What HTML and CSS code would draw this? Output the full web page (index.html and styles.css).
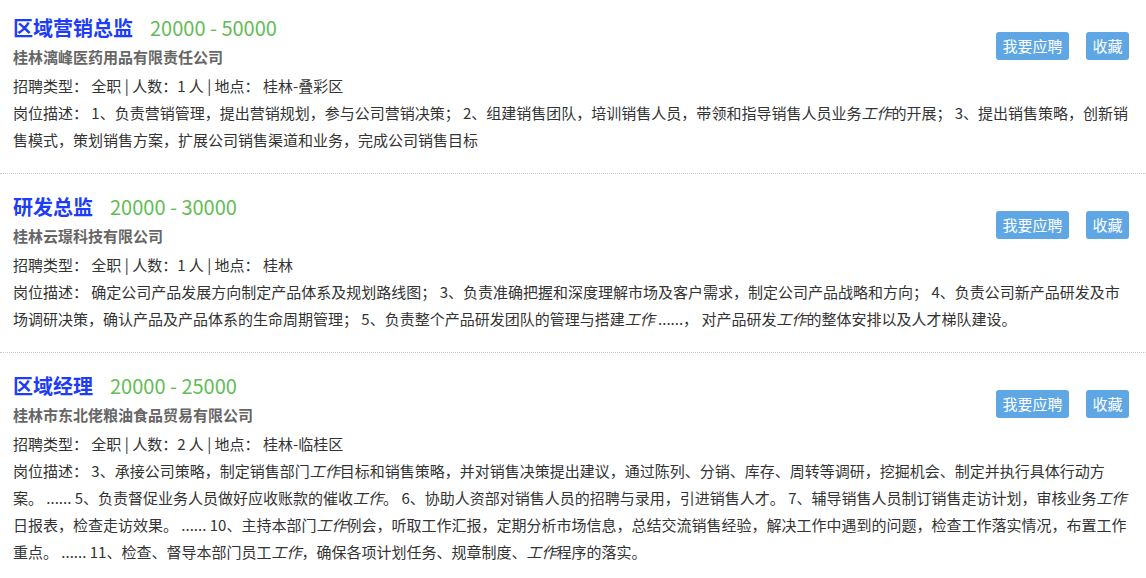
FILE: index.html
```html
<!DOCTYPE html>
<html lang="zh-CN">
<head>
<meta charset="utf-8">
<title>职位列表</title>
<link rel="stylesheet" href="styles.css">
</head>
<body>
<div class="list">
  <div class="job">
    <div class="head">
      <div class="main">
        <div class="title-row"><a class="title">区域营销总监</a><span class="salary">20000 - 50000</span></div>
        <div class="company">桂林漓峰医药用品有限责任公司</div>
      </div>
      <div class="actions"><a class="btn">我要应聘</a><a class="btn">收藏</a></div>
    </div>
    <div class="meta">招聘类型： 全职 | 人数：1 人 | 地点： 桂林-叠彩区</div>
    <div class="desc">岗位描述： 1、负责营销管理，提出营销规划，参与公司营销决策； 2、组建销售团队，培训销售人员，带领和指导销售人员业务<em>工作</em>的开展； 3、提出销售策略，创新销售模式，策划销售方案，扩展公司销售渠道和业务，完成公司销售目标</div>
  </div>
  <div class="job">
    <div class="head">
      <div class="main">
        <div class="title-row"><a class="title">研发总监</a><span class="salary">20000 - 30000</span></div>
        <div class="company">桂林云璟科技有限公司</div>
      </div>
      <div class="actions"><a class="btn">我要应聘</a><a class="btn">收藏</a></div>
    </div>
    <div class="meta">招聘类型： 全职 | 人数：1 人 | 地点： 桂林</div>
    <div class="desc">岗位描述： 确定公司产品发展方向制定产品体系及规划路线图； 3、负责准确把握和深度理解市场及客户需求，制定公司产品战略和方向； 4、负责公司新产品研发及市场调研决策，确认产品及产品体系的生命周期管理； 5、负责整个产品研发团队的管理与搭建<em>工作</em> ......， 对产品研发<em>工作</em>的整体安排以及人才梯队建设。</div>
  </div>
  <div class="job">
    <div class="head">
      <div class="main">
        <div class="title-row"><a class="title">区域经理</a><span class="salary">20000 - 25000</span></div>
        <div class="company">桂林市东北佬粮油食品贸易有限公司</div>
      </div>
      <div class="actions"><a class="btn">我要应聘</a><a class="btn">收藏</a></div>
    </div>
    <div class="meta">招聘类型： 全职 | 人数：2 人 | 地点： 桂林-临桂区</div>
    <div class="desc">岗位描述： 3、承接公司策略，制定销售部门<em>工作</em>目标和销售策略，并对销售决策提出建议，通过陈列、分销、库存、周转等调研，挖掘机会、制定并执行具体行动方案。 ...... 5、负责督促业务人员做好应收账款的催收<em>工作</em>。 6、协助人资部对销售人员的招聘与录用，引进销售人才。 7、辅导销售人员制订销售走访计划，审核业务<em>工作</em>日报表，检查走访效果。 ...... 10、主持本部门<em>工作</em>例会，听取工作汇报，定期分析市场信息，总结交流销售经验，解决工作中遇到的问题，检查工作落实情况，布置工作重点。 ...... 11、检查、督导本部门员工<em>工作</em>，确保各项计划任务、规章制度、<em>工作</em>程序的落实。</div>
  </div>
</div>
</body>
</html>
```
FILE: styles.css
```css
html, body {
  margin: 0;
  padding: 0;
  background: #fff;
}
body {
  font-family: "Noto Sans CJK SC", "Noto Sans", sans-serif;
  font-size: 15px;
  color: #333;
  overflow: hidden;
}
.job {
  padding: 18px 13px 20px 13px;
  border-bottom: 1px dotted #c8c8c8;
}
.job:first-child {
  padding-top: 13px;
}
.head {
  display: flex;
  justify-content: space-between;
  align-items: flex-start;
}
.title-row {
  line-height: 30px;
  height: 30px;
  white-space: nowrap;
}
.title {
  font-size: 20px;
  font-weight: bold;
  color: #1c3cfa;
  text-decoration: none;
}
.salary {
  font-size: 20px;
  color: #62bc55;
  margin-left: 17px;
}
.company {
  font-weight: bold;
  color: #666;
  line-height: 27px;
  margin-bottom: 2px;
}
.actions {
  display: flex;
  gap: 17px;
  margin-top: 19px;
  margin-right: 4px;
}
.btn {
  display: block;
  height: 28px;
  line-height: 28px;
  padding: 0 6.5px;
  background: #5fa7e4;
  color: #fff;
  border-radius: 3px;
  font-size: 15px;
}
.meta {
  line-height: 27px;
}
.desc {
  line-height: 27px;
}
.desc em {
  font-style: italic;
}
```
